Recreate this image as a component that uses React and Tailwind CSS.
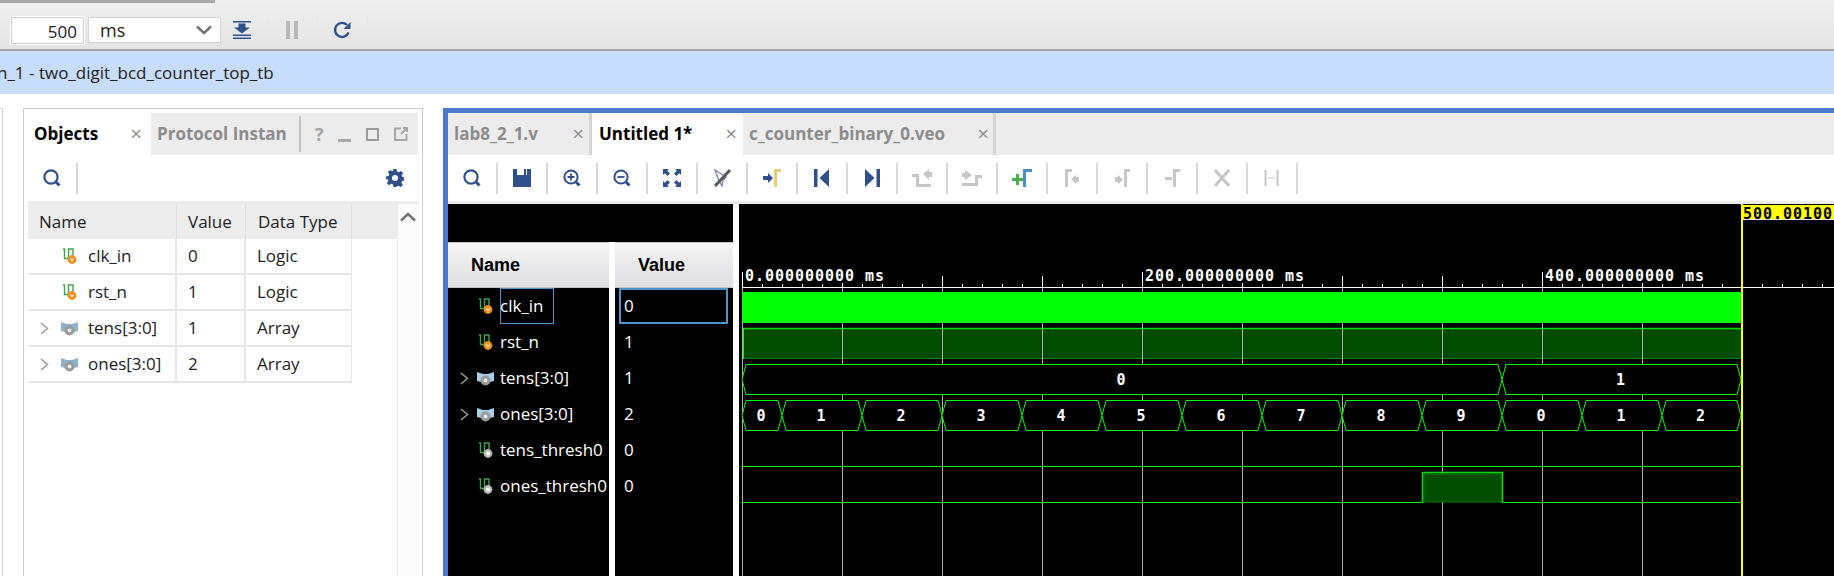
const NAVY = "#30508c";
const GREY = "#c6c6c6";

const Search = ({ color = NAVY }) => (
  <svg width="20" height="20" viewBox="0 0 20 20" fill="none">
    <circle cx="9" cy="9" r="6.6" stroke={color} strokeWidth="2.2" />
    <path d="M14 14l3.5 3.5" stroke={color} strokeWidth="3" />
  </svg>
);

const toolbarIcons = [
  <Search key="search" />,
  <svg key="save" width="20" height="20" viewBox="0 0 20 20">
    <path d="M1 1h4v6h7V1h2v6h1V1h4v18H1z" fill={NAVY} />
  </svg>,
  <svg key="zin" width="20" height="20" viewBox="0 0 20 20" fill="none">
    <circle cx="9" cy="9" r="6.6" stroke={NAVY} strokeWidth="2" />
    <path d="M9 5.5v7M5.5 9h7" stroke={NAVY} strokeWidth="1.8" />
    <path d="M14 14l3.5 3.5" stroke={NAVY} strokeWidth="3" />
  </svg>,
  <svg key="zout" width="20" height="20" viewBox="0 0 20 20" fill="none">
    <circle cx="9" cy="9" r="6.6" stroke={NAVY} strokeWidth="2" />
    <path d="M5.5 9h7" stroke={NAVY} strokeWidth="1.8" />
    <path d="M14 14l3.5 3.5" stroke={NAVY} strokeWidth="3" />
  </svg>,
  <svg key="fit" width="20" height="20" viewBox="0 0 20 20" fill={NAVY}>
    <path d="M1 1h6L5.2 2.8 8 5.6 5.6 8 2.8 5.2 1 7zM19 1v6l-1.8-1.8L14.4 8 12 5.6l2.8-2.8L13 1zM1 19v-6l1.8 1.8L5.6 12 8 14.4l-2.8 2.8L7 19zM19 19h-6l1.8-1.8L12 14.4l2.4-2.4 2.8 2.8L19 13z" />
  </svg>,
  <svg key="snap" width="20" height="20" viewBox="0 0 20 20" fill="none">
    <path d="M3 2l11 7-3 3-1 6-3-5z" stroke="#6f83ab" strokeWidth="1.3" />
    <path d="M18 2L3 18" stroke="#5a5a5a" strokeWidth="3" />
  </svg>,
  <svg key="cursor" width="20" height="20" viewBox="0 0 20 20">
    <path d="M1 8h5V5l5 5-5 5v-3H1z" fill={NAVY} />
    <path d="M12 1h7v3h-4v15h-3z" fill="#e8cf6a" />
  </svg>,
  <svg key="first" width="20" height="20" viewBox="0 0 20 20" fill={NAVY}>
    <path d="M2 1h3.5v18H2zM17 1v18L7.5 10z" />
  </svg>,
  <svg key="last" width="20" height="20" viewBox="0 0 20 20" fill={NAVY}>
    <path d="M18 1h-3.5v18H18zM3 1v18l9.5-9z" />
  </svg>,
  <svg key="prev" width="20" height="20" viewBox="0 0 20 20" fill={GREY}>
    <path d="M0 6h7v10h12v3H4V9H0z" />
    <path d="M11 6l6-5v3h3v5h-3v3z" />
  </svg>,
  <svg key="next" width="20" height="20" viewBox="0 0 20 20" fill={GREY}>
    <path d="M0 5h3V2l7 5-7 5V9H0z" />
    <path d="M0 15h13V7h7v3h-4v8H0z" />
  </svg>,
  <svg key="add" width="20" height="20" viewBox="0 0 20 20">
    <path d="M4 6h3v4h4v3H7v4H4v-4H0v-3h4z" fill="#4cae4c" />
    <path d="M11 1h9v3h-6v15h-3z" fill="#4a8fc0" />
  </svg>,
];

const disabledIcons = [
  <svg key="a" width="20" height="20" viewBox="0 0 20 20" fill={GREY}>
    <path d="M3 1h7v3H6v15H3z" />
    <path d="M9 11l5-4v2h3v5h-3v2z" />
  </svg>,
  <svg key="b" width="20" height="20" viewBox="0 0 20 20" fill={GREY}>
    <path d="M3 9h3V7l5 4.5L6 16v-2H3z" />
    <path d="M12 1h6v3h-3v15h-3z" />
  </svg>,
  <svg key="c" width="20" height="20" viewBox="0 0 20 20" fill={GREY}>
    <path d="M3 9h7v3H3z" />
    <path d="M11 1h7v3h-4v15h-3z" />
  </svg>,
  <svg key="d" width="20" height="20" viewBox="0 0 20 20" fill="none">
    <path d="M3 2l14 16M17 2L3 18" stroke={GREY} strokeWidth="3" />
  </svg>,
  <svg key="e" width="20" height="20" viewBox="0 0 20 20" fill="none">
    <path d="M3.5 2v16M15.5 2v16" stroke={GREY} strokeWidth="2" />
    <path d="M6 10h7" stroke={GREY} strokeWidth="1" />
  </svg>,
];

const LogicIcon = ({ dot = "#ef8f1c" }) => (
  <svg width="15" height="18" viewBox="0 0 15 17" fill="none">
    <path d="M1 1.5h1.5V11h4V1.5H11V8" stroke="#3fa34d" strokeWidth="1.4" />
    <circle cx="10" cy="12" r="4.4" fill={dot} />
    {dot === "#ef8f1c" ? (
      <path d="M8.4 10.6l1.6 3 1.6-3" stroke="#fff" strokeWidth="0.9" />
    ) : (
      <circle cx="10" cy="12" r="1.9" fill="#fff" />
    )}
  </svg>
);

const ArrayIcon = ({ lobe = "#8fb2cc" }) => (
  <svg width="17" height="15" viewBox="0 0 17 15">
    <path d="M0 1l6 2h5l6-2v9l-4 1H4l-4-1z" fill={lobe} />
    <circle cx="8.5" cy="9.5" r="5" fill="#9a9a9a" />
    <circle cx="8.5" cy="9.5" r="2" fill="#ececec" />
  </svg>
);

const Chevron = () => (
  <svg width="9" height="13" viewBox="0 0 9 13" fill="none">
    <path d="M1 1l6.5 5.5L1 12" stroke="#9a9a9a" strokeWidth="1.5" />
  </svg>
);

const rows = [
  { name: "clk_in", value: "0", type: "Logic", kind: "logic" },
  { name: "rst_n", value: "1", type: "Logic", kind: "logic" },
  { name: "tens[3:0]", value: "1", type: "Array", kind: "array" },
  { name: "ones[3:0]", value: "2", type: "Array", kind: "array" },
];

const waveRows = [
  ...rows,
  { name: "tens_thresh0", value: "0", kind: "wire" },
  { name: "ones_thresh0", value: "0", kind: "wire" },
];

function TopToolbar() {
  return (
    <div className="h-[51px] shrink-0 border-b-2 border-[#a3a3a3] bg-gradient-to-b from-[#f0f0f0] to-[#e4e4e4]">
      <div className="h-[3px] w-[215px] bg-[#a9a9a9]" />
      <div className="flex items-center pl-[10px] pt-[12px]">
        <div className="h-[29px] w-[75px] border-2 border-white bg-white pr-[6px] pt-[1px] text-right text-[17px] leading-[25px] text-[#222] outline outline-1 outline-[#d0d0d0] -outline-offset-2">
          500
        </div>
        <div className="ml-[3px] flex h-[26px] w-[133px] items-center justify-between border border-[#d4d4d4] bg-white pl-[11px] pr-[8px] text-[18px] text-[#222]">
          <span>ms</span>
          <svg width="16" height="10" viewBox="0 0 16 10" fill="none">
            <path d="M1 1.5l7 6.5 7-6.5" stroke="#757575" strokeWidth="2.6" />
          </svg>
        </div>
        <svg width="18" height="18" viewBox="0 0 18 18" className="ml-[12px]" fill={NAVY}>
          <path d="M0 0h18v1.4H0zM5.5 2.5h7v4H17l-8 6-8-6h4.5zM0 13.5h18V15H0zM0 16.6h18V18H0z" />
        </svg>
        <div className="ml-[16px] h-[30px] w-px bg-[#e8e8e8]" />
        <div className="ml-[18px] flex gap-[4px]">
          <div className="h-[18px] w-[4px] bg-[#b8b8b8]" />
          <div className="h-[18px] w-[4px] bg-[#b8b8b8]" />
        </div>
        <div className="ml-[19px] h-[30px] w-px bg-[#e8e8e8]" />
        <svg width="18" height="18" viewBox="0 0 18 18" className="ml-[15px]" fill="none">
          <path d="M15.5 11.5A7 7 0 1 1 14 4" stroke={NAVY} strokeWidth="2.4" />
          <path d="M17.5 1v7h-7z" fill={NAVY} />
        </svg>
        <div className="ml-[16px] h-[30px] w-px bg-[#e8e8e8]" />
      </div>
    </div>
  );
}

function ObjectsPanel() {
  return (
    <div className="ml-[20px] flex w-[400px] flex-col border-x border-t border-[#cfcfcf] bg-white px-[4px] pt-[4px]">
      <div className="flex h-[42px] shrink-0 items-center bg-[#ececec] text-[17px] font-bold">
        <div className="flex h-full w-[123px] items-center justify-between bg-white pl-[6px] pr-[9px] text-black">
          <span>Objects</span>
          <span className="text-[20px] font-normal leading-none text-[#8c8c8c]">×</span>
        </div>
        <div className="h-full w-[148px] pl-[6px] leading-[42px] text-[#8c8c8c]">Protocol Instan</div>
        <div className="h-[36px] w-[2px] bg-[#c4c4c4]" />
        <div className="flex flex-1 items-center justify-between pl-[14px] pr-[10px] text-[#a4a4a4]">
          <span className="text-[18px]">?</span>
          <span className="mt-[12px] h-[3px] w-[13px] bg-[#a8a8a8]" />
          <span className="h-[13px] w-[13px] border-[2.5px] border-[#9a9a9a]" />
          <svg width="14" height="14" viewBox="0 0 14 14" fill="none">
            <path d="M7 1.5H1V13h11.5V7M7 7l6-6M9 1h4v4" stroke="#a8a8a8" strokeWidth="2" />
          </svg>
        </div>
      </div>
      <div className="flex h-[46px] shrink-0 items-center justify-between bg-white px-[14px]">
        <div className="flex items-center gap-[14px]">
          <Search />
          <div className="h-[31px] w-[2px] bg-[#d8d8d8]" />
        </div>
        <svg width="18" height="18" viewBox="0 0 24 24" fill={NAVY}>
          <path d="M10 0h4l.7 3.4 2.3 1 3-1.900 2.800 2.800-1.900 3 1 2.300 3.100.7v4l-3.400.7-1 2.300 1.900 3-2.800 2.800-3-1.900-2.300 1L14 24h-4l-.7-3.400-2.300-1-3 1.900-2.800-2.800 1.900-3-1-2.300L0 14v-4l3.400-.7 1-2.300-1.900-3L5.300 1.200l3 1.900 1-.7zM12 8a4 4 0 1 0 0 8 4 4 0 0 0 0-8z" fillRule="evenodd" />
        </svg>
      </div>
      <div className="h-[3px] shrink-0 bg-[#ececec]" />
      <div className="flex flex-1">
        <div className="w-[369px]">
          <div className="flex h-[35px] items-center bg-[#ececec] text-[17px] text-[#222]">
            <div className="flex h-full w-[149px] items-center border-r border-[#dedede] pl-[11px]">Name</div>
            <div className="flex h-full w-[69px] items-center border-r border-[#dedede] pl-[11px]">Value</div>
            <div className="flex h-full w-[106px] items-center border-r border-[#dedede] pl-[12px]">Data Type</div>
          </div>
          {rows.map((row) => (
            <div key={row.name} className="flex h-[36px] w-[324px] items-center border-b-2 border-r border-[#e6e6e6] text-[17px] text-[#222]">
              <div className="flex h-full w-[149px] items-center border-r-2 border-[#e6e6e6]">
                <div className="flex w-[21px] justify-end">{row.kind === "array" && <Chevron />}</div>
                <div className="flex w-[39px] justify-center pl-[2px]">
                  {row.kind === "array" ? <ArrayIcon /> : <LogicIcon />}
                </div>
                <span>{row.name}</span>
              </div>
              <div className="flex h-full w-[69px] items-center border-r-2 border-[#e6e6e6] pl-[11px]">{row.value}</div>
              <div className="pl-[11px]">{row.type}</div>
            </div>
          ))}
        </div>
        <div className="flex flex-1 justify-center border-l border-[#ececec] bg-[#fbfbfb] pt-[8px]">
          <svg width="16" height="10" viewBox="0 0 16 10" fill="none">
            <path d="M1 8.5l7-6.5 7 6.5" stroke="#757575" strokeWidth="2.6" />
          </svg>
        </div>
      </div>
    </div>
  );
}

function WaveToolbar() {
  return (
    <div className="flex h-[46px] shrink-0 items-center bg-white">
      {[...toolbarIcons, ...disabledIcons].map((icon, i) => (
        <div key={i} className="flex h-full items-center">
          <div className="flex w-[48px] justify-center">{icon}</div>
          <div className="h-[31px] w-[2px] bg-[#d8d8d8]" />
        </div>
      ))}
    </div>
  );
}

function ColumnHeader({ title }) {
  return (
    <div className="flex h-[46px] shrink-0 items-center border-y border-[#c4c4c4] bg-gradient-to-b from-[#f4f4f4] to-[#dfdfe2] pl-[23px] font-['Liberation_Sans',sans-serif] text-[18px] font-bold text-black">
      {title}
    </div>
  );
}

const GREEN = "#00ff00";
const onesSegments = [
  [742, 782, "0"], [782, 862, "1"], [862, 942, "2"], [942, 1022, "3"],
  [1022, 1102, "4"], [1102, 1182, "5"], [1182, 1262, "6"], [1262, 1342, "7"],
  [1342, 1422, "8"], [1422, 1502, "9"], [1502, 1582, "0"], [1582, 1662, "1"],
  [1662, 1741, "2"],
];
const tensSegments = [
  [742, 1502, "0"],
  [1502, 1741, "1"],
];

function Bus({ segments, top, bottom }) {
  const mid = (top + bottom) / 2;
  return segments.map(([a, b, label]) => (
    <g key={a}>
      <path
        d={`M${a} ${mid}L${a + 4} ${top}H${b - 4}L${b} ${mid}L${b - 4} ${bottom}H${a + 4}Z`}
        fill="#000"
        stroke={GREEN}
      />
      <text x={(a + b) / 2 - 1} y={mid + 5.5} textAnchor="middle" className="fill-white font-['DejaVu_Sans_Mono',monospace] text-[15px] font-bold">
        {label}
      </text>
    </g>
  ));
}

function WaveCanvas() {
  const grid = [];
  for (let x = 742; x < 1741; x += 100) grid.push(x);
  const ticks = [];
  for (let x = 742; x < 1834; x += 20) ticks.push(x);
  const labels = [
    [742, "0.000000000 ms"],
    [1142, "200.000000000 ms"],
    [1542, "400.000000000 ms"],
  ];
  return (
    <svg viewBox="739 204 1095 372" className="h-[372px] w-[1095px]">
      <rect x="739" y="204" width="1095" height="372" fill="#000" />
      {/* ruler */}
      <path d="M742 287.5H1834" stroke="#fff" />
      {ticks.map((x) => (
        <path key={x} d={`M${x + 0.5} 284V288`} stroke="#fff" />
      ))}
      {grid.map((x) => (
        <path key={x} d={`M${x + 0.5} 276V288`} stroke="#fff" />
      ))}
      {labels.map(([x, text]) => (
        <g key={x}>
          <rect x={x + 1} y="266" width={text.length * 10 + 3} height="17" fill="#000" />
          <path d={`M${x + 0.5} 272V288`} stroke="#fff" />
          <text x={x + 3} y="281" className="fill-white font-['DejaVu_Sans_Mono',monospace] text-[15px] font-bold tracking-[0.97px]">
            {text}
          </text>
        </g>
      ))}
      {/* rst_n fill goes under the grid */}
      <rect x="742" y="328" width="999" height="31" fill="#004d00" />
      <path d="M742 328.5H1741" stroke="#00e000" strokeWidth="1.4" />
      <path d="M742 358.5H1741" stroke="#007a00" />
      <path d="M743 328V359" stroke={GREEN} strokeWidth="2" />
      {grid.map((x) => (
        <path key={x} d={`M${x + 0.5} 288V576`} stroke="#aeaeae" />
      ))}
      {/* clk_in toggles too fast to show single edges */}
      <rect x="742" y="292" width="999" height="31" fill={GREEN} />
      <Bus segments={tensSegments} top={364.5} bottom={394.5} />
      <Bus segments={onesSegments} top={400.5} bottom={430.5} />
      {/* thresh lines */}
      <path d="M742 466.5H1741" stroke={GREEN} />
      <path d="M742 502.5H1422.5V472.5H1502.5V502.5H1741" fill="none" stroke={GREEN} />
      <rect x="1424" y="474" width="78" height="28" fill="#004d00" stroke="#007a00" />
      <path d="M1422.5 502.5V472.5H1502.5V502.5" fill="none" stroke="#00e000" strokeWidth="1.5" />
      {/* cursor */}
      <rect x="1741" y="204" width="2" height="372" fill="#ffff00" />
      <rect x="1743" y="205" width="91" height="14" fill="#ffff00" />
      <path d="M1743 219.5H1834" stroke="#e8e8e8" />
      <text x="1743" y="218.5" className="fill-black font-['DejaVu_Sans_Mono',monospace] text-[15px] font-bold tracking-[0.97px]">
        500.00100
      </text>
    </svg>
  );
}

function WavePanel() {
  return (
    <div className="ml-[20px] flex flex-1 flex-col overflow-hidden border-l-[5px] border-t-[5px] border-[#4a7bcc] bg-white">
      <div className="flex h-[42px] shrink-0 bg-[#ececec] text-[17px]">
        <div className="flex h-full w-[144px] items-center justify-between border-r-[3px] border-[#d4d4d4] pl-[6px] pr-[5px] font-bold text-[#8c8c8c]">
          <span>lab8_2_1.v</span>
          <span className="text-[20px] font-normal leading-none">×</span>
        </div>
        <div className="flex h-full w-[151px] items-center justify-between bg-white pl-[7px] pr-[6px] font-bold text-black">
          <span>Untitled 1*</span>
          <span className="text-[20px] font-normal leading-none text-[#8c8c8c]">×</span>
        </div>
        <div className="flex h-full w-[253px] items-center justify-between border-r-[3px] border-[#d4d4d4] pl-[6px] pr-[4px] font-bold text-[#8c8c8c]">
          <span>c_counter_binary_0.veo</span>
          <span className="text-[20px] font-normal leading-none">×</span>
        </div>
      </div>
      <WaveToolbar />
      <div className="h-[3px] shrink-0 bg-[#ececec]" />
      <div className="flex flex-1 bg-white">
        <div className="flex w-[285px] flex-col">
          <div className="h-[38px] shrink-0 bg-black" />
          <div className="flex flex-1 gap-[6px]">
            <div className="flex w-[161px] flex-col bg-black">
              <ColumnHeader title="Name" />
              {waveRows.map((row, i) => (
                <div key={row.name} className="relative flex h-[36px] shrink-0 items-center text-[17px] text-white">
                  <div className="flex w-[21px] justify-end">{row.kind === "array" && <Chevron />}</div>
                  <div className="flex w-[31px] justify-center pl-[2px]">
                    {row.kind === "array" ? (
                      <ArrayIcon lobe="#a6cfe8" />
                    ) : (
                      <LogicIcon dot={row.kind === "wire" ? "#b8b8b8" : "#ef8f1c"} />
                    )}
                  </div>
                  <span>{row.name}</span>
                  {i === 0 && <div className="absolute left-[52px] top-0 h-[36px] w-[54px] border border-[#4a94d0]" />}
                </div>
              ))}
            </div>
            <div className="flex w-[118px] flex-col bg-black">
              <ColumnHeader title="Value" />
              {waveRows.map((row, i) => (
                <div key={row.name} className="relative flex h-[36px] shrink-0 items-center pl-[9px] text-[17px] text-white">
                  {row.value}
                  {i === 0 && <div className="absolute left-[4px] top-0 h-[36px] w-[109px] border-2 border-[#4a94d0]" />}
                </div>
              ))}
            </div>
          </div>
        </div>
        <div className="w-[6px]" />
        <WaveCanvas />
      </div>
    </div>
  );
}

export default function App() {
  return (
    <div className="flex h-[576px] w-[1834px] flex-col overflow-hidden bg-white font-['Open_Sans',sans-serif]">
      <TopToolbar />
      <div className="flex h-[43px] shrink-0 items-center overflow-hidden bg-[#c8dcfc] text-[17px] text-[#222]">
        <span className="ml-[-3px]">n_1 - two_digit_bcd_counter_top_tb</span>
      </div>
      <div className="flex flex-1 pt-[14px]">
        <div className="w-[3px] border-r border-t border-[#d4d4d4]" />
        <ObjectsPanel />
        <WavePanel />
      </div>
    </div>
  );
}
